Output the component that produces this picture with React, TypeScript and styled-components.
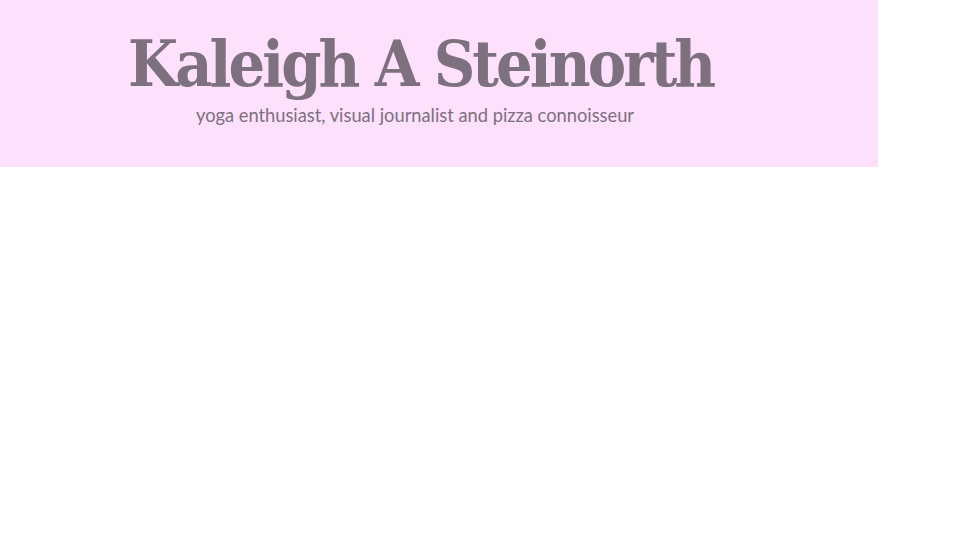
import React from "react";
import styled, { createGlobalStyle } from "styled-components";

const Global = createGlobalStyle`
  html, body { margin: 0; padding: 0; background: #ffffff; }
`;

const Header = styled.header`
  width: 878px;
  height: 167px;
  box-sizing: border-box;
  background: #fce0fc;
  padding: 28px 0 0 128px;
  display: flex;
  flex-direction: column;
  align-items: flex-start;
`;

const Title = styled.h1`
  margin: 0;
  font-family: "DejaVu Serif Condensed", "DejaVu Serif", serif;
  font-stretch: condensed;
  font-weight: bold;
  font-size: 64px;
  line-height: 72px;
  letter-spacing: -2.9px;
  color: #7d707f;
  white-space: nowrap;
`;

const Tagline = styled.p`
  margin: 3px 0 0 68px;
  font-family: "Lato", sans-serif;
  font-size: 18.3px;
  line-height: 24px;
  color: #7d707f;
  white-space: nowrap;
`;

export default function App() {
  return (
    <>
      <Global />
      <Header>
        <Title>Kaleigh A Steinorth</Title>
        <Tagline>yoga enthusiast, visual journalist and pizza connoisseur</Tagline>
      </Header>
    </>
  );
}
